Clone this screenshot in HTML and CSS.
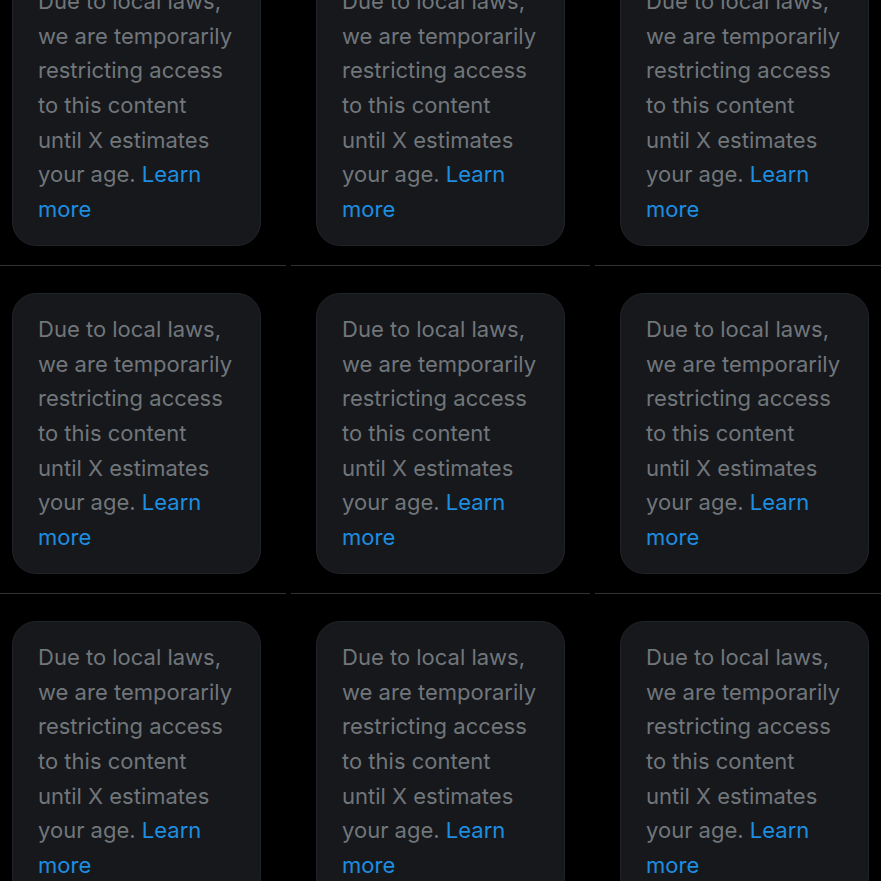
FILE: index.html
```html
<!DOCTYPE html>
<html lang="en">
<head>
<meta charset="utf-8">
<title>Restricted media grid</title>
<link rel="stylesheet" href="styles.css">
</head>
<body>
<div class="grid">
  <div class="cell"><div class="card"><p class="msg">Due to local laws, we are temporarily restricting access to this content until X estimates your age. <a class="link" href="#">Learn more</a></p></div></div>
  <div class="cell"><div class="card"><p class="msg">Due to local laws, we are temporarily restricting access to this content until X estimates your age. <a class="link" href="#">Learn more</a></p></div></div>
  <div class="cell"><div class="card"><p class="msg">Due to local laws, we are temporarily restricting access to this content until X estimates your age. <a class="link" href="#">Learn more</a></p></div></div>
  <div class="cell"><div class="card"><p class="msg">Due to local laws, we are temporarily restricting access to this content until X estimates your age. <a class="link" href="#">Learn more</a></p></div></div>
  <div class="cell"><div class="card"><p class="msg">Due to local laws, we are temporarily restricting access to this content until X estimates your age. <a class="link" href="#">Learn more</a></p></div></div>
  <div class="cell"><div class="card"><p class="msg">Due to local laws, we are temporarily restricting access to this content until X estimates your age. <a class="link" href="#">Learn more</a></p></div></div>
  <div class="cell"><div class="card"><p class="msg">Due to local laws, we are temporarily restricting access to this content until X estimates your age. <a class="link" href="#">Learn more</a></p></div></div>
  <div class="cell"><div class="card"><p class="msg">Due to local laws, we are temporarily restricting access to this content until X estimates your age. <a class="link" href="#">Learn more</a></p></div></div>
  <div class="cell"><div class="card"><p class="msg">Due to local laws, we are temporarily restricting access to this content until X estimates your age. <a class="link" href="#">Learn more</a></p></div></div>
</div>
</body>
</html>
```
FILE: styles.css
```css
html, body {
  margin: 0;
  padding: 0;
  background: #000;
  overflow: hidden;
  height: 881px;
}
.grid {
  display: grid;
  grid-template-columns: repeat(3, 299px);
  column-gap: 5px;
  margin-left: -13px;
  margin-top: -62px;
  width: 907px;
}
.cell {
  padding: 27px 0 19px 25px;
  border-bottom: 1px solid #2f3336;
}
.card {
  box-sizing: border-box;
  width: 249px;
  height: 281px;
  background: #16181c;
  border: 1px solid #202327;
  border-radius: 24px;
  padding: 18px 26px 0 25px;
}
.msg {
  margin: 0;
  font-family: Inter, "Noto Sans", sans-serif;
  font-size: 22px;
  line-height: 34.67px;
  color: #71767b;
}
.link {
  color: #1d8ee0;
  text-decoration: none;
}
```
